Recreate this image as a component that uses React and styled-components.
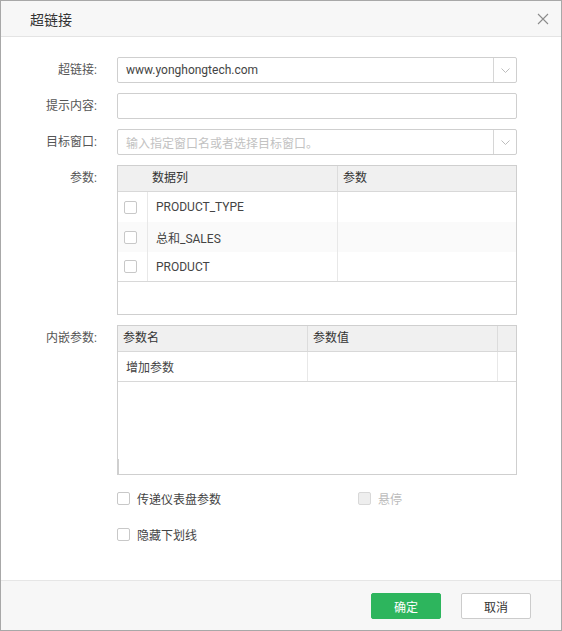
import styled, { createGlobalStyle } from "styled-components";

const GlobalStyle = createGlobalStyle`
  body {
    margin: 0;
    font-family: Roboto, "Noto Sans CJK SC", sans-serif;
    font-size: 12px;
    color: #333;
  }
`;

const Dialog = styled.div`
  width: 562px;
  height: 631px;
  box-sizing: border-box;
  border: 1px solid #a8a8a8;
  display: flex;
  flex-direction: column;
  background: #fff;
`;

const Header = styled.div`
  height: 35px;
  flex-shrink: 0;
  border-bottom: 1px solid #e4e4e4;
  background: #f7f7f7;
  display: flex;
  align-items: center;
  justify-content: space-between;
  padding: 0 12px 0 29px;
`;

const Title = styled.span`
  font-size: 14px;
  color: #333;
`;

const CloseBtn = styled.span`
  display: flex;
  width: 12px;
  height: 12px;
  cursor: pointer;
`;

const Body = styled.div`
  flex: 1;
  padding: 20px 44px 0 0;
`;

const FormRow = styled.div`
  display: grid;
  grid-template-columns: 96px 1fr;
  column-gap: 20px;
  margin-bottom: 10px;
`;

const Label = styled.div`
  text-align: right;
  line-height: 26px;
  color: #555;
`;

const Field = styled.div`
  height: 26px;
  box-sizing: border-box;
  border: 1px solid #cfcfcf;
  border-radius: 2px;
  display: flex;
  align-items: center;
`;

const FieldText = styled.span`
  flex: 1;
  padding-left: 8px;
  color: ${(p) => (p.$placeholder ? "#c2c2c2" : "#444")};
`;

const Arrow = styled.span`
  width: 22px;
  height: 100%;
  border-left: 1px solid #d6d6d6;
  display: flex;
  align-items: center;
  justify-content: center;
`;

const Grid = styled.div`
  height: 150px;
  box-sizing: border-box;
  border: 1px solid #cfcfcf;
  position: relative;
`;

const GridHead = styled.div`
  display: grid;
  grid-template-columns: ${(p) => p.$cols};
  height: 26px;
  box-sizing: border-box;
  background: #f0f0f0;
  border-bottom: 1px solid #d8d8d8;
`;

const HeadCell = styled.div`
  padding-left: 5px;
  line-height: 25px;
  color: #333;
  border-left: ${(p) => (p.$divider ? "1px solid #dcdcdc" : "none")};
`;

const GridRow = styled.div`
  display: grid;
  grid-template-columns: ${(p) => p.$cols};
  height: 30px;
  box-sizing: border-box;
  background: ${(p) => (p.$alt ? "#fafafa" : "#fff")};
  border-bottom: ${(p) => (p.$last ? "1px solid #d8d8d8" : "none")};
`;

const Cell = styled.div`
  display: flex;
  align-items: center;
  padding-left: ${(p) => (p.$check ? "6px" : "8px")};
  color: #444;
  border-left: ${(p) => (p.$divider ? "1px solid #e8e8e8" : "none")};
`;

const ScrollStub = styled.div`
  position: absolute;
  left: -1px;
  bottom: -1px;
  width: 2px;
  height: 16px;
  background: #cfcfcf;
`;

const Box = styled.span`
  width: 13px;
  height: 13px;
  box-sizing: border-box;
  border: 1px solid ${(p) => (p.$disabled ? "#d8d8d8" : "#c8c8c8")};
  border-radius: 2px;
  background: ${(p) => (p.$disabled ? "#eeeeee" : "#fff")};
  flex-shrink: 0;
`;

const Options = styled.div`
  margin: 10px 0 0 116px;
  display: flex;
  flex-direction: column;
  gap: 10px;
`;

const OptionRow = styled.div`
  display: flex;
  height: 26px;
  align-items: center;
`;

const Option = styled.label`
  display: flex;
  align-items: center;
  gap: 7px;
  width: ${(p) => p.$width || "auto"};
  color: ${(p) => (p.$disabled ? "#bcbcbc" : "#444")};
`;

const Footer = styled.div`
  height: 50px;
  box-sizing: border-box;
  flex-shrink: 0;
  border-top: 1px solid #e6e6e6;
  background: #f7f7f7;
  display: flex;
  justify-content: flex-end;
  align-items: flex-start;
  gap: 20px;
  padding: 12px 30px 0 0;
`;

const Button = styled.button`
  width: 70px;
  height: 26px;
  box-sizing: border-box;
  border-radius: 2px;
  font-family: inherit;
  font-size: 12px;
  cursor: pointer;
  border: 1px solid ${(p) => (p.$primary ? "#2db55d" : "#cccccc")};
  background: ${(p) => (p.$primary ? "#2db55d" : "#fff")};
  color: ${(p) => (p.$primary ? "#fff" : "#333")};
`;

function Chevron() {
  return (
    <svg width="9" height="5" viewBox="0 0 9 5">
      <path d="M0.5 0.5 L4.5 4.5 L8.5 0.5" fill="none" stroke="#bdbdbd" strokeWidth="1" />
    </svg>
  );
}

const paramCols = "29px 190px 1fr";
const embedCols = "189px 190px 1fr";
const columns = ["PRODUCT_TYPE", "总和_SALES", "PRODUCT"];

export default function App() {
  return (
    <>
      <GlobalStyle />
      <Dialog>
        <Header>
          <Title>超链接</Title>
          <CloseBtn>
            <svg width="12" height="12" viewBox="0 0 12 12">
              <path d="M1 1 L11 11 M11 1 L1 11" stroke="#8c8c8c" strokeWidth="1.1" />
            </svg>
          </CloseBtn>
        </Header>
        <Body>
          <FormRow>
            <Label>超链接:</Label>
            <Field>
              <FieldText>www.yonghongtech.com</FieldText>
              <Arrow>
                <Chevron />
              </Arrow>
            </Field>
          </FormRow>
          <FormRow>
            <Label>提示内容:</Label>
            <Field>
              <FieldText />
            </Field>
          </FormRow>
          <FormRow>
            <Label>目标窗口:</Label>
            <Field>
              <FieldText $placeholder>输入指定窗口名或者选择目标窗口。</FieldText>
              <Arrow>
                <Chevron />
              </Arrow>
            </Field>
          </FormRow>
          <FormRow>
            <Label>参数:</Label>
            <Grid>
              <GridHead $cols={paramCols}>
                <HeadCell />
                <HeadCell>数据列</HeadCell>
                <HeadCell $divider>参数</HeadCell>
              </GridHead>
              {columns.map((name, i) => (
                <GridRow
                  key={name}
                  $cols={paramCols}
                  $alt={i % 2 === 1}
                  $last={i === columns.length - 1}
                >
                  <Cell $check>
                    <Box />
                  </Cell>
                  <Cell $divider>{name}</Cell>
                  <Cell $divider />
                </GridRow>
              ))}
            </Grid>
          </FormRow>
          <FormRow>
            <Label>内嵌参数:</Label>
            <Grid>
              <GridHead $cols={embedCols}>
                <HeadCell>参数名</HeadCell>
                <HeadCell $divider>参数值</HeadCell>
                <HeadCell $divider />
              </GridHead>
              <GridRow $cols={embedCols} $last>
                <Cell>增加参数</Cell>
                <Cell $divider />
                <Cell $divider />
              </GridRow>
              <ScrollStub />
            </Grid>
          </FormRow>
          <Options>
            <OptionRow>
              <Option $width="241px">
                <Box />
                传递仪表盘参数
              </Option>
              <Option $disabled>
                <Box $disabled />
                悬停
              </Option>
            </OptionRow>
            <OptionRow>
              <Option>
                <Box />
                隐藏下划线
              </Option>
            </OptionRow>
          </Options>
        </Body>
        <Footer>
          <Button $primary>确定</Button>
          <Button>取消</Button>
        </Footer>
      </Dialog>
    </>
  );
}
